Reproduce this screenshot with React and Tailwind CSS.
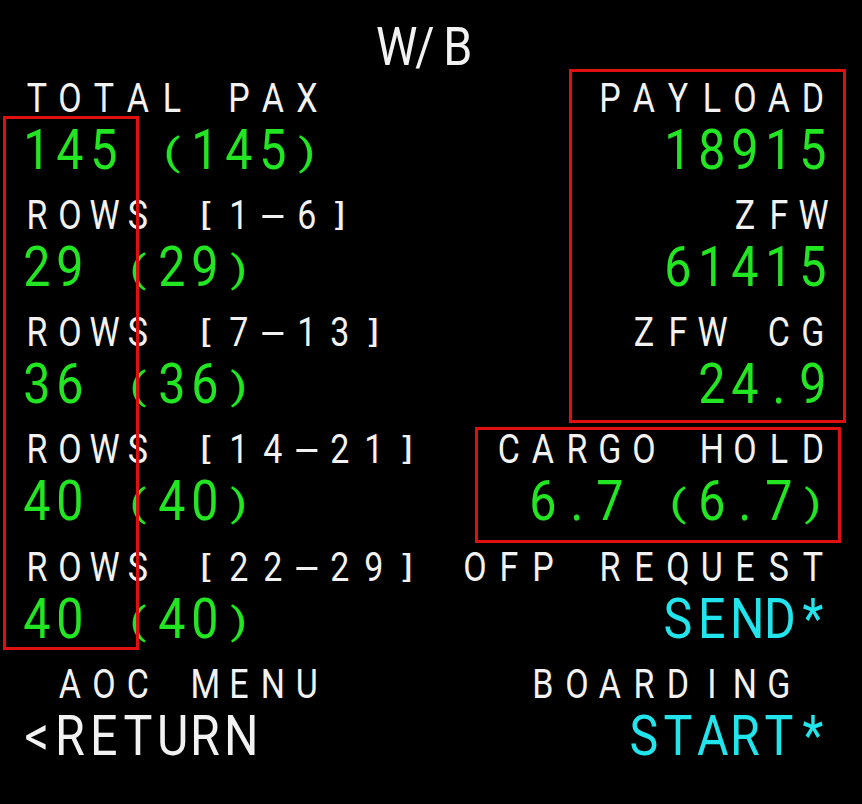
const CELL = 'inline-block w-[33.76px] text-center'

const colors = {
  w: 'text-[#f2f2f2]',
  g: 'text-[#22e622]',
  c: 'text-[#22e4ec]',
}

// MCDU glyphs: brackets/parens sit within cap height, dash is wide
function glyphClass(ch, big) {
  if ('()'.includes(ch)) return 'scale-x-[0.9] scale-y-[0.68] translate-y-[-1px]'
  if ('[]'.includes(ch)) return 'scale-y-[0.72] translate-y-[-1px]'
  if (ch === '-') return 'scale-x-[2.2]'
  return big ? 'scale-x-[0.88]' : 'scale-x-[0.85]'
}

function Cells({ s, color = 'w', big }) {
  return (
    <span className={`flex ${colors[color]}`}>
      {s.split('').map((ch, i) => (
        <span key={i} className={`${CELL} ${glyphClass(ch, big)}`}>
          {ch === ' ' ? '\u00a0' : ch}
        </span>
      ))}
    </span>
  )
}

function Line({ left, right, big, lc = 'w', rc = 'w' }) {
  return (
    <div
      className={`flex justify-between leading-none ${big ? 'h-[73.2px] text-[55px]' : 'h-[44px] text-[40px]'}`}
    >
      {left ? <Cells s={left} color={lc} big={big} /> : <span />}
      {right ? <Cells s={right} color={rc} big={big} /> : <span />}
    </div>
  )
}

const rows = [
  ['TOTAL PAX', 'PAYLOAD', '145 (145)', '18915', 'g', 'g'],
  ['ROWS [1-6]', 'ZFW', '29 (29)', '61415', 'g', 'g'],
  ['ROWS [7-13]', 'ZFW CG', '36 (36)', '24.9', 'g', 'g'],
  ['ROWS [14-21]', 'CARGO HOLD', '40 (40)', '6.7 (6.7)', 'g', 'g'],
  ['ROWS [22-29]', 'OFP REQUEST', '40 (40)', 'SEND*', 'g', 'c'],
  [' AOC MENU', 'BOARDING ', '<RETURN', 'START*', 'w', 'c'],
]

export default function App() {
  return (
    <div className="relative w-[862px] h-[804px] bg-black overflow-hidden font-['Roboto',sans-serif] font-normal">
      <div className="w-[810px] ml-[19.6px] pt-[21px]">
        <div className="h-[57.8px] flex justify-center leading-none text-[53px]">
          <Cells s="W/B" big />
        </div>
        {rows.map(([l1, r1, l2, r2, c1, c2], i) => (
          <div key={i}>
            <Line left={l1} right={r1} />
            <Line left={l2} right={r2} big lc={c1} rc={c2} />
          </div>
        ))}
      </div>

      {/* highlight boxes */}
      <div className="absolute left-[3px] top-[116px] w-[136px] h-[534px] border-[3px] border-[#e01010]" />
      <div className="absolute left-[569px] top-[69px] w-[277px] h-[354px] border-[3px] border-[#e01010]" />
      <div className="absolute left-[475px] top-[427px] w-[366px] h-[116px] border-[3px] border-[#e01010]" />
    </div>
  )
}
